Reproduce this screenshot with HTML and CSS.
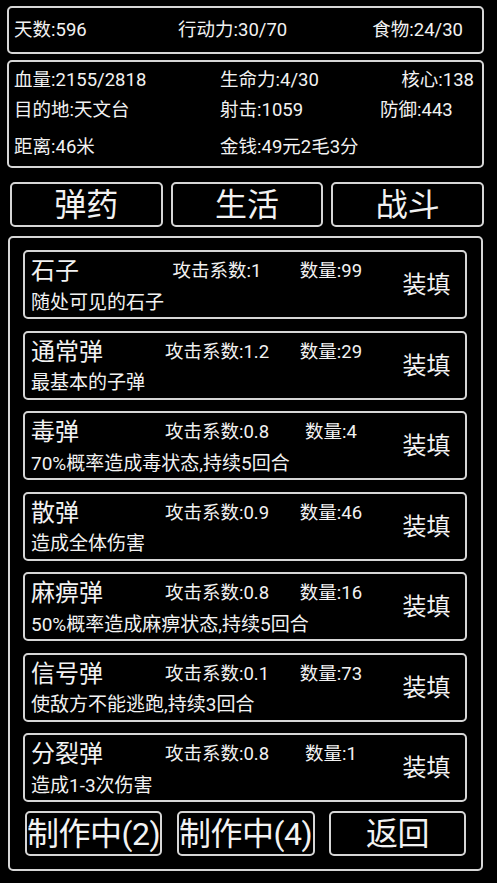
FILE: index.html
```html
<!DOCTYPE html>
<html lang="zh">
<head>
<meta charset="utf-8">
<link rel="stylesheet" href="styles.css">
</head>
<body>
<div class="page">
  <div class="box top-bar">
    <span class="c1">天数:596</span>
    <span class="c2">行动力:30/70</span>
    <span class="c3">食物:24/30</span>
  </div>

  <div class="box stats">
    <div class="srow r1">
      <span>血量:2155/2818</span>
      <span>生命力:4/30</span>
      <span class="end">核心:138</span>
    </div>
    <div class="srow r2">
      <span>目的地:天文台</span>
      <span>射击:1059</span>
      <span>防御:443</span>
    </div>
    <div class="srow r3">
      <span>距离:46米</span>
      <span>金钱:49元2毛3分</span>
      <span></span>
    </div>
  </div>

  <div class="tabs">
    <div class="btn tab">弹药</div>
    <div class="btn tab">生活</div>
    <div class="btn tab">战斗</div>
  </div>

  <div class="box panel">
    <div class="list">
      <div class="card">
        <div class="name">石子</div>
        <div class="atk">攻击系数:1</div>
        <div class="qty">数量:99</div>
        <div class="load">装填</div>
        <div class="desc">随处可见的石子</div>
      </div>
      <div class="card">
        <div class="name">通常弹</div>
        <div class="atk">攻击系数:1.2</div>
        <div class="qty">数量:29</div>
        <div class="load">装填</div>
        <div class="desc">最基本的子弹</div>
      </div>
      <div class="card">
        <div class="name">毒弹</div>
        <div class="atk">攻击系数:0.8</div>
        <div class="qty">数量:4</div>
        <div class="load">装填</div>
        <div class="desc">70%概率造成毒状态,持续5回合</div>
      </div>
      <div class="card">
        <div class="name">散弹</div>
        <div class="atk">攻击系数:0.9</div>
        <div class="qty">数量:46</div>
        <div class="load">装填</div>
        <div class="desc">造成全体伤害</div>
      </div>
      <div class="card">
        <div class="name">麻痹弹</div>
        <div class="atk">攻击系数:0.8</div>
        <div class="qty">数量:16</div>
        <div class="load">装填</div>
        <div class="desc">50%概率造成麻痹状态,持续5回合</div>
      </div>
      <div class="card">
        <div class="name">信号弹</div>
        <div class="atk">攻击系数:0.1</div>
        <div class="qty">数量:73</div>
        <div class="load">装填</div>
        <div class="desc">使敌方不能逃跑,持续3回合</div>
      </div>
      <div class="card">
        <div class="name">分裂弹</div>
        <div class="atk">攻击系数:0.8</div>
        <div class="qty">数量:1</div>
        <div class="load">装填</div>
        <div class="desc">造成1-3次伤害</div>
      </div>
    </div>

    <div class="actions">
      <div class="btn act">制作中(2)</div>
      <div class="btn act">制作中(4)</div>
      <div class="btn act">返回</div>
    </div>
  </div>
</div>
</body>
</html>
```

FILE: styles.css
```css
html, body {
  margin: 0;
  padding: 0;
  background: #000;
}

body {
  color: #f2f2f2;
  font-family: Roboto, "Noto Sans CJK SC", sans-serif;
  width: 497px;
  height: 883px;
  overflow: hidden;
}

.page {
  display: flex;
  flex-direction: column;
  padding: 6px 13px 0 7px;
}

.box {
  border: 2px solid #d6d6d6;
  border-radius: 5px;
}

.top-bar {
  box-sizing: border-box;
  height: 48px;
  display: flex;
  align-items: center;
  padding: 0 19px 1px 5px;
  font-size: 18.5px;
  line-height: 26px;
}

.top-bar .c1 { width: 164px; }
.top-bar .c2 { flex: 1; }

.stats {
  margin-top: 6px;
  padding: 5px 8px 6px 5px;
  font-size: 18.5px;
  line-height: 26px;
}

.srow {
  display: grid;
  grid-template-columns: 206px 160px 1fr;
}

.srow .end { justify-self: end; }
.r2 { margin-top: 4px; }
.r3 { margin-top: 11px; }

.tabs {
  margin: 14px 0 0 3px;
  display: grid;
  grid-template-columns: repeat(3, 1fr);
  column-gap: 8px;
}

.btn {
  border: 2px solid #d6d6d6;
  border-radius: 5px;
  display: flex;
  align-items: center;
  justify-content: center;
  font-size: 32px;
  white-space: nowrap;
}

.tab {
  height: 45px;
  box-sizing: border-box;
  padding-bottom: 6px;
}

.panel {
  margin: 9px 1px 0 1px;
  height: 635px;
  box-sizing: border-box;
  padding: 12px 14px 0 13px;
}

.list {
  display: flex;
  flex-direction: column;
  gap: 11.5px;
}

.card {
  height: 69px;
  box-sizing: border-box;
  border: 2px solid #d6d6d6;
  border-radius: 5px;
  padding: 4px 0 1px 6px;
  display: grid;
  grid-template-columns: 131px 110px 118px 1fr;
  grid-template-rows: 30px 30px;
  align-items: center;
}

.name {
  font-size: 24px;
  line-height: 30px;
}

.atk, .qty {
  font-size: 18.5px;
  line-height: 30px;
  text-align: center;
  white-space: nowrap;
}

.load {
  grid-column: 4;
  grid-row: 1 / span 2;
  font-size: 24px;
  text-align: center;
  padding-right: 2px;
  margin-top: -7px;
}

.desc {
  grid-column: 1 / span 3;
  grid-row: 2;
  font-size: 19px;
  line-height: 30px;
  padding-top: 3px;
  white-space: nowrap;
}

.actions {
  margin-top: 8.5px;
  padding: 0 0 0 2px;
  display: grid;
  grid-template-columns: 137px 138px 137px;
  column-gap: 14.5px;
}

.act {
  height: 45px;
  box-sizing: border-box;
  letter-spacing: -0.5px;
  padding-bottom: 5px;
}
```
